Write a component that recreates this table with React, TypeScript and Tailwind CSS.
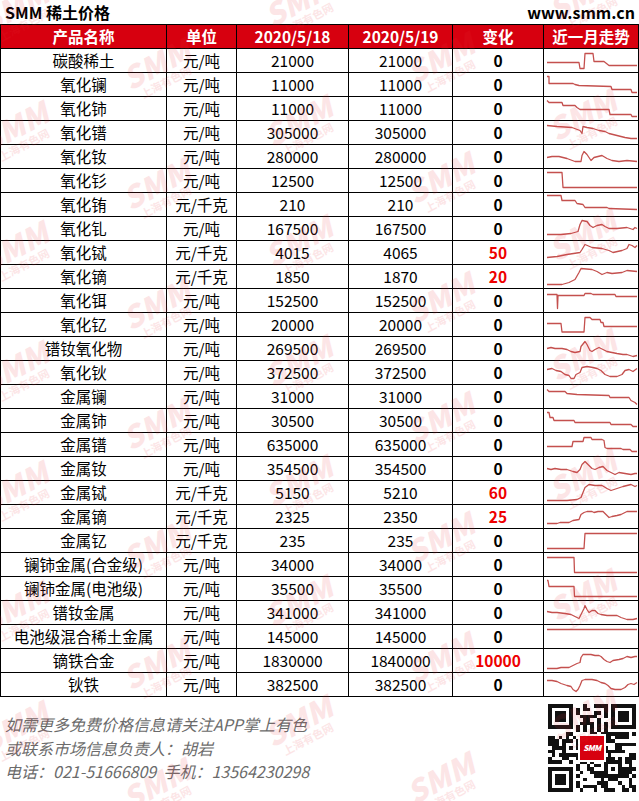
import React from "react";

type Row = {
  name: string;
  unit: string;
  d1: string;
  d2: string;
  change: string;
  trend: number[][];
};

const rows: Row[] = [
  { name: "碳酸稀土", unit: "元/吨", d1: "21000", d2: "21000", change: "0", trend: [[0,14],[32,14],[33,20],[37,20],[38,5],[46,5],[47,13],[57,13],[62,17],[90,17]] },
  { name: "氧化镧", unit: "元/吨", d1: "11000", d2: "11000", change: "0", trend: [[0,4],[2,4],[2,11],[26,11],[28,12],[32,13],[64,14],[65,17],[84,17],[85,20],[90,20]] },
  { name: "氧化铈", unit: "元/吨", d1: "11000", d2: "11000", change: "0", trend: [[0,4],[2,6],[15,6],[16,9],[28,9],[30,11],[33,13],[62,13],[63,18],[84,18],[85,20],[90,20]] },
  { name: "氧化镨", unit: "元/吨", d1: "305000", d2: "305000", change: "0", trend: [[0,5],[10,6],[25,7],[33,10],[35,13],[36,6],[40,7],[46,8],[52,10],[58,11],[62,13],[70,15],[78,17],[84,18],[90,18]] },
  { name: "氧化钕", unit: "元/吨", d1: "280000", d2: "280000", change: "0", trend: [[0,13],[5,12],[12,12],[20,14],[28,17],[34,17],[35,11],[37,7],[40,10],[44,16],[47,13],[51,12],[55,11],[60,14],[65,16],[72,17],[80,16],[90,17]] },
  { name: "氧化钐", unit: "元/吨", d1: "12500", d2: "12500", change: "0", trend: [[0,4],[15,4],[16,19],[90,19]] },
  { name: "氧化铕", unit: "元/千克", d1: "210", d2: "210", change: "0", trend: [[0,3],[14,3],[15,8],[28,8],[30,11],[36,12],[38,15],[60,15],[62,16],[90,17]] },
  { name: "氧化钆", unit: "元/吨", d1: "167500", d2: "167500", change: "0", trend: [[0,18],[14,18],[24,17],[31,15],[33,8],[35,4],[40,5],[43,9],[46,11],[50,9],[55,8],[58,10],[62,12],[70,12],[80,11],[86,13],[88,11],[90,12]] },
  { name: "氧化铽", unit: "元/千克", d1: "4015", d2: "4065", change: "50", trend: [[0,17],[10,16],[20,14],[33,12],[35,9],[38,4],[45,7],[55,8],[62,10],[66,12],[75,10],[80,8],[82,4],[85,5],[88,7],[90,5]] },
  { name: "氧化镝", unit: "元/千克", d1: "1850", d2: "1870", change: "20", trend: [[0,20],[15,20],[22,18],[28,15],[32,8],[34,4],[45,5],[50,7],[55,10],[60,8],[65,9],[75,8],[80,6],[90,7]] },
  { name: "氧化铒", unit: "元/吨", d1: "152500", d2: "152500", change: "0", trend: [[0,6],[10,6],[10.5,20],[11,7],[37,7],[38,5],[44,5],[46,6],[68,6],[69,8],[90,8]] },
  { name: "氧化钇", unit: "元/吨", d1: "20000", d2: "20000", change: "0", trend: [[0,11],[14,11],[15,19.5],[37,19.5],[38,5],[43,5],[45,7],[53,7],[54,10],[56,10],[57,14],[90,14]] },
  { name: "镨钕氧化物", unit: "元/吨", d1: "269500", d2: "269500", change: "0", trend: [[0,12],[4,11],[8,12],[15,12],[20,13],[24,15],[28,16],[33,15],[34,10],[38,5],[40,8],[43,14],[45,15],[48,13],[52,11],[56,13],[60,15],[65,16],[70,17],[76,18],[80,18],[86,20],[90,19]] },
  { name: "氧化钬", unit: "元/吨", d1: "372500", d2: "372500", change: "0", trend: [[0,9],[5,8],[9,10],[14,11],[18,14],[22,15],[24,18],[27,18],[29,14],[33,12],[35,7],[40,6],[46,7],[50,8],[54,10],[58,14],[63,16],[70,16],[75,14],[78,10],[82,9],[86,11],[90,8]] },
  { name: "金属镧", unit: "元/吨", d1: "31000", d2: "31000", change: "0", trend: [[0,5],[2,7],[18,7],[20,9],[30,10],[62,11],[63,13],[82,13],[84,16],[88,18],[90,20]] },
  { name: "金属铈", unit: "元/吨", d1: "30500", d2: "30500", change: "0", trend: [[0,4],[2,4],[3,9],[6,9],[7,12],[27,12],[28,14],[63,14],[64,16],[84,16],[86,18],[90,18]] },
  { name: "金属镨", unit: "元/吨", d1: "635000", d2: "635000", change: "0", trend: [[0,14],[25,14],[26,9],[36,9],[37,5],[44,5],[45,7],[55,7],[57,8],[58,15],[60,16],[74,16],[76,17],[83,17],[85,19],[90,19]] },
  { name: "金属钕", unit: "元/吨", d1: "354500", d2: "354500", change: "0", trend: [[0,12],[4,13],[8,12],[14,13],[20,13],[26,15],[30,16],[33,13],[35,8],[38,5],[41,8],[45,12],[48,13],[52,11],[56,10],[60,14],[64,16],[68,18],[72,16],[78,17],[84,18],[88,17],[90,17]] },
  { name: "金属铽", unit: "元/千克", d1: "5150", d2: "5210", change: "60", trend: [[0,20],[20,20],[30,19],[34,17],[36,12],[38,7],[42,4],[48,5],[55,5],[60,8],[64,10],[70,8],[76,6],[80,5],[84,4],[88,6],[90,5]] },
  { name: "金属镝", unit: "元/千克", d1: "2325", d2: "2350", change: "25", trend: [[0,19],[10,19],[13,18],[22,18],[26,16],[32,15],[34,10],[37,8],[40,7],[45,7],[47,8],[51,7],[56,7],[58,9],[62,13],[65,12],[70,11],[74,10],[76,9],[80,7],[90,7]] },
  { name: "金属钇", unit: "元/千克", d1: "235", d2: "235", change: "0", trend: [[0,20],[37,20],[38,5],[90,5]] },
  { name: "镧铈金属(合金级)", unit: "元/吨", d1: "34000", d2: "34000", change: "0", trend: [[0,5],[27,5],[27.5,20],[90,20]] },
  { name: "镧铈金属(电池级)", unit: "元/吨", d1: "35500", d2: "35500", change: "0", trend: [[0,4],[1,4],[2,10],[27,10],[27.5,20],[90,20]] },
  { name: "镨钕金属", unit: "元/吨", d1: "341000", d2: "341000", change: "0", trend: [[0,11],[5,12],[10,12],[18,13],[24,14],[28,16],[32,18],[34,14],[37,8],[38,5],[40,9],[42,12],[45,10],[48,10],[51,13],[54,14],[60,15],[70,15],[74,17],[80,19],[86,19],[90,18]] },
  { name: "电池级混合稀土金属", unit: "元/吨", d1: "145000", d2: "145000", change: "0", trend: [[0,5],[90,5]] },
  { name: "镝铁合金", unit: "元/吨", d1: "1830000", d2: "1840000", change: "10000", trend: [[0,20],[10,20],[14,19],[22,19],[26,17],[30,15],[33,14],[34,9],[36,6],[44,6],[48,7],[52,7],[54,8],[57,11],[60,13],[63,14],[66,12],[72,11],[76,10],[80,8],[84,9],[88,8],[90,8]] },
  { name: "钬铁", unit: "元/吨", d1: "382500", d2: "382500", change: "0", trend: [[0,8],[5,8],[10,9],[14,11],[20,13],[24,14],[26,17],[29,19],[31,17],[33,13],[35,8],[38,7],[45,7],[50,8],[54,10],[58,11],[61,13],[64,16],[68,17],[74,17],[78,15],[81,12],[84,11],[87,12],[90,10]] },
];

function Sparkline({ points }: { points: number[][] }) {
  const d = points.map((p, i) => `${i ? "L" : "M"}${p[0] + 3} ${p[1] - 0.5}`).join(" ");
  return (
    <svg width="95" height="23" viewBox="0 0 95 23" className="block">
      <path d={d} fill="none" stroke="#c4504e" strokeWidth="1.3" strokeLinejoin="round" />
    </svg>
  );
}

// fake QR matrix, 25x25, deterministic
function buildQr() {
  const n = 25;
  const m: number[][] = Array.from({ length: n }, () => Array(n).fill(0));
  let seed = 20200519;
  const rnd = () => {
    seed = (seed * 1103515245 + 12345) % 2147483648;
    return seed / 2147483648;
  };
  for (let y = 0; y < n; y++) for (let x = 0; x < n; x++) m[y][x] = rnd() > 0.5 ? 1 : 0;
  const finder = (ox: number, oy: number) => {
    for (let y = -1; y <= 7; y++)
      for (let x = -1; x <= 7; x++) {
        const X = ox + x;
        const Y = oy + y;
        if (X < 0 || Y < 0 || X >= n || Y >= n) continue;
        const edge = x === 0 || x === 6 || y === 0 || y === 6;
        const core = x >= 2 && x <= 4 && y >= 2 && y <= 4;
        m[Y][X] = x >= 0 && x <= 6 && y >= 0 && y <= 6 && (edge || core) ? 1 : 0;
      }
  };
  finder(0, 0);
  finder(18, 0);
  finder(0, 18);
  for (let i = 8; i < 17; i++) {
    m[6][i] = i % 2 === 0 ? 1 : 0;
    m[i][6] = i % 2 === 0 ? 1 : 0;
  }
  for (let y = 16; y <= 20; y++)
    for (let x = 16; x <= 20; x++) {
      const edge = x === 16 || x === 20 || y === 16 || y === 20;
      m[y][x] = edge || (x === 18 && y === 18) ? 1 : 0;
    }
  let d = "";
  for (let y = 0; y < n; y++) for (let x = 0; x < n; x++) if (m[y][x]) d += `M${x} ${y}h1v1h-1z`;
  return d;
}

const qrPath = buildQr();

function QrCode() {
  return (
    <div className="relative h-[88px] w-[88px]">
      <svg width="88" height="88" viewBox="0 0 25 25" shapeRendering="crispEdges">
        <rect width="25" height="25" fill="#fff" />
        <path d={qrPath} fill="#111" />
        <rect x="8.6" y="8.6" width="7.8" height="7.8" fill="#fff" />
      </svg>
      <div className="absolute left-[32px] top-[32px] flex h-[24px] w-[24px] items-center justify-center bg-[#d7000f]">
        <span className="text-[8px] font-black italic leading-none tracking-[-0.5px] text-white">SMM</span>
      </div>
    </div>
  );
}

function Watermark({ x, y }: { x: number; y: number }) {
  return (
    <div
      className="pointer-events-none absolute flex w-[80px] -rotate-[28deg] flex-col items-center text-[#e8323c] opacity-[0.12]"
      style={{ left: x - 40, top: y - 24 }}
    >
      <span className="text-[30px] font-black italic leading-[30px]">SMM</span>
      <span className="text-[11px] font-bold leading-[13px]">上海有色网</span>
    </div>
  );
}

const marks: { x: number; y: number }[] = [];
for (let j = 0; j <= 4; j++) {
  for (let i = -1; i <= 7; i++) {
    const x = 585 - 142 * j;
    const y = 122 - 57 * j + 120 * i;
    if (y > -30 && y < 830) marks.push({ x, y });
  }
}

const cell = "h-[24px] border border-black p-0 text-center align-middle";

export default function App() {
  return (
    <div
      className="relative h-[801px] w-[639px] overflow-hidden bg-white text-black"
      style={{ fontFamily: '"Noto Sans CJK SC", "Noto Sans", sans-serif' }}
    >
      <div className="flex h-[24px] items-center justify-between pl-[5px] pr-[4px] text-[16px] font-bold leading-none">
        <span>SMM 稀土价格</span>
        <span>www.smm.cn</span>
      </div>

      <table className="w-[638px] table-fixed border-collapse text-[15.5px] leading-none">
        <colgroup>
          <col className="w-[166px]" />
          <col className="w-[70px]" />
          <col className="w-[112px]" />
          <col className="w-[104px]" />
          <col className="w-[91px]" />
          <col className="w-[95px]" />
        </colgroup>
        <thead>
          <tr className="bg-[#d7000f] font-bold text-white">
            <th className={cell}>产品名称</th>
            <th className={cell}>单位</th>
            <th className={cell}>2020/5/18</th>
            <th className={cell}>2020/5/19</th>
            <th className={cell}>变化</th>
            <th className={cell}>近一月走势</th>
          </tr>
        </thead>
        <tbody>
          {rows.map((r) => (
            <tr key={r.name}>
              <td className={cell}>{r.name}</td>
              <td className={cell}>{r.unit}</td>
              <td className={cell}>{r.d1}</td>
              <td className={cell}>{r.d2}</td>
              <td className={`${cell} font-bold ${r.change === "0" ? "text-black" : "text-[#ee0000]"}`}>{r.change}</td>
              <td className={cell}>
                <Sparkline points={r.trend} />
              </td>
            </tr>
          ))}
        </tbody>
      </table>

      <div className="flex justify-between pl-[5px] pr-[3px]">
        <div className="mt-[16px] text-[16px] italic leading-[23.5px] text-[#6b6b6b]">
          <p>如需更多免费价格信息请关注APP掌上有色</p>
          <p>或联系市场信息负责人：胡岩</p>
          <p>电话：021-51666809&nbsp;&nbsp;手机：13564230298</p>
        </div>
        <div className="mt-[7px]">
          <QrCode />
        </div>
      </div>

      {marks.map((m, i) => (
        <Watermark key={i} x={m.x} y={m.y} />
      ))}
    </div>
  );
}
